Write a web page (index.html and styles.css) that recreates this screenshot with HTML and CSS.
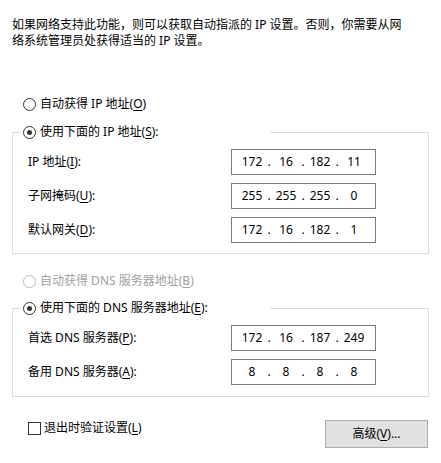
FILE: index.html
```html
<!DOCTYPE html>
<html lang="zh-CN">
<head>
<meta charset="utf-8">
<title>IPv4 属性</title>
<link rel="stylesheet" href="styles.css">
</head>
<body>
<div class="dialog">
  <p class="intro">如果网络支持此功能，则可以获取自动指派的 IP 设置。否则，你需要从网<br>络系统管理员处获得适当的 IP 设置。</p>

  <div class="radio-row first"><span class="radio"></span><span>自动获得 IP 地址(<u>O</u>)</span></div>

  <fieldset class="group">
    <legend class="legend"><span class="radio checked"></span><span>使用下面的 IP 地址(<u>S</u>):</span></legend>
    <div class="group-body">
      <div class="field"><span class="label">IP 地址(<u>I</u>):</span>
        <div class="ipbox"><span class="seg">172</span><span class="dot">.</span><span class="seg">16</span><span class="dot">.</span><span class="seg">182</span><span class="dot">.</span><span class="seg">11</span></div>
      </div>
      <div class="field"><span class="label">子网掩码(<u>U</u>):</span>
        <div class="ipbox"><span class="seg">255</span><span class="dot">.</span><span class="seg">255</span><span class="dot">.</span><span class="seg">255</span><span class="dot">.</span><span class="seg">0</span></div>
      </div>
      <div class="field"><span class="label">默认网关(<u>D</u>):</span>
        <div class="ipbox"><span class="seg">172</span><span class="dot">.</span><span class="seg">16</span><span class="dot">.</span><span class="seg">182</span><span class="dot">.</span><span class="seg">1</span></div>
      </div>
    </div>
  </fieldset>

  <div class="radio-row dns disabled"><span class="radio"></span><span>自动获得 DNS 服务器地址(<u>B</u>)</span></div>

  <fieldset class="group dns-group">
    <legend class="legend"><span class="radio checked"></span><span>使用下面的 DNS 服务器地址(<u>E</u>):</span></legend>
    <div class="group-body">
      <div class="field"><span class="label">首选 DNS 服务器(<u>P</u>):</span>
        <div class="ipbox"><span class="seg">172</span><span class="dot">.</span><span class="seg">16</span><span class="dot">.</span><span class="seg">187</span><span class="dot">.</span><span class="seg">249</span></div>
      </div>
      <div class="field"><span class="label">备用 DNS 服务器(<u>A</u>):</span>
        <div class="ipbox"><span class="seg">8</span><span class="dot">.</span><span class="seg">8</span><span class="dot">.</span><span class="seg">8</span><span class="dot">.</span><span class="seg">8</span></div>
      </div>
    </div>
  </fieldset>

  <div class="footer">
    <div class="check"><span class="checkbox"></span><span>退出时验证设置(<u>L</u>)</span></div>
    <div class="button">高级(<u>V</u>)...</div>
  </div>
</div>
</body>
</html>
```
FILE: styles.css
```css
* { box-sizing: border-box; }

body {
  margin: 0;
  background: #ffffff;
  font-family: "Noto Sans", "Noto Sans CJK SC", sans-serif;
  font-size: 12px;
  line-height: 16px;
  color: #000000;
}

u { text-underline-offset: 2px; }

.dialog {
  padding: 17px 12px 0 12px;
}

.intro {
  margin: 0;
  white-space: nowrap;
}

.radio-row {
  display: flex;
  align-items: center;
  height: 16px;
  padding-left: 11px;
  white-space: nowrap;
}
.radio-row.first { margin-top: 47px; }
.radio-row.dns { margin-top: 19px; }
.radio-row.disabled { color: #a0a0a0; }
.radio-row.disabled .radio { border-color: #bcbcbc; }

.radio {
  width: 13px;
  height: 13px;
  border: 1px solid #333333;
  border-radius: 50%;
  margin-right: 4px;
  display: inline-flex;
  align-items: center;
  justify-content: center;
  flex: none;
  background: #ffffff;
}
.radio.checked::after {
  content: "";
  width: 5px;
  height: 5px;
  border-radius: 50%;
  background: #333333;
}

.group {
  margin: 12px 0 0;
  padding: 0;
  border: 1px solid #dcdcdc;
  min-width: 0;
}
.group.dns-group { margin-top: 11px; }

.legend {
  display: flex;
  align-items: center;
  height: 16px;
  padding: 0 2px;
  margin-left: 8px;
  width: 249px;
  white-space: nowrap;
}

.group-body {
  padding: 9px 52px 10px 15px;
  display: flex;
  flex-direction: column;
  gap: 8px;
}
.dns-group .group-body { padding-bottom: 11px; }

.field {
  display: flex;
  align-items: center;
  justify-content: space-between;
  height: 26px;
}

.ipbox {
  width: 145px;
  height: 26px;
  border: 1px solid #7a7a7a;
  background: #ffffff;
  display: flex;
  align-items: center;
  padding-left: 6px;
}
.seg { width: 28px; text-align: center; }
.dot { width: 6px; text-align: center; }

.footer {
  display: flex;
  justify-content: space-between;
  align-items: flex-start;
  margin-top: 23px;
  padding-left: 16px;
  padding-right: 1px;
}

.check {
  display: flex;
  align-items: center;
  height: 16px;
  white-space: nowrap;
}
.checkbox {
  width: 13px;
  height: 13px;
  border: 1px solid #333333;
  margin-right: 3px;
  flex: none;
}

.button {
  width: 103px;
  height: 28px;
  background: #e1e1e1;
  border: 1px solid #adadad;
  display: flex;
  align-items: center;
  justify-content: center;
  white-space: nowrap;
}
```
